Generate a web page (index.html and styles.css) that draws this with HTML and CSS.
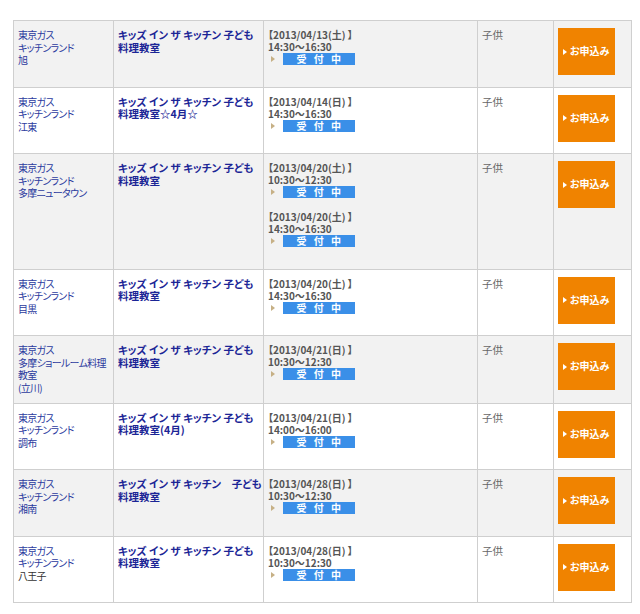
FILE: index.html
```html
<!DOCTYPE html>
<html lang="ja">
<head>
<meta charset="utf-8">
<title>キッズ イン ザ キッチン</title>
<link rel="stylesheet" href="styles.css">
</head>
<body>
<div class="wrap">
<table class="schedule">
  <colgroup>
    <col class="c-place"><col class="c-title"><col class="c-date"><col class="c-target"><col class="c-apply">
  </colgroup>
  <tbody>
    <tr class="odd">
      <td class="place">東京ガス<br>キッチンランド<br>旭</td>
      <td class="title">キッズ イン ザ キッチン 子ども<br>料理教室</td>
      <td class="dates">
        <div class="entry"><div class="d">【2013/04/13(土) 】</div><div class="t">14:30～16:30</div><div class="st"><span class="tri"></span><span class="badge">受 付 中</span></div></div>
      </td>
      <td class="target">子供</td>
      <td class="apply"><a class="btn" href="#"><span class="btri"></span>お申込み</a></td>
    </tr>
    <tr>
      <td class="place">東京ガス<br>キッチンランド<br>江東</td>
      <td class="title">キッズ イン ザ キッチン 子ども<br>料理教室☆4月☆</td>
      <td class="dates">
        <div class="entry"><div class="d">【2013/04/14(日) 】</div><div class="t">14:30～16:30</div><div class="st"><span class="tri"></span><span class="badge">受 付 中</span></div></div>
      </td>
      <td class="target">子供</td>
      <td class="apply"><a class="btn" href="#"><span class="btri"></span>お申込み</a></td>
    </tr>
    <tr class="odd">
      <td class="place">東京ガス<br>キッチンランド<br>多摩ニュータウン</td>
      <td class="title">キッズ イン ザ キッチン 子ども<br>料理教室</td>
      <td class="dates">
        <div class="entry"><div class="d">【2013/04/20(土) 】</div><div class="t">10:30～12:30</div><div class="st"><span class="tri"></span><span class="badge">受 付 中</span></div></div>
        <div class="entry"><div class="d">【2013/04/20(土) 】</div><div class="t">14:30～16:30</div><div class="st"><span class="tri"></span><span class="badge">受 付 中</span></div></div>
      </td>
      <td class="target">子供</td>
      <td class="apply"><a class="btn" href="#"><span class="btri"></span>お申込み</a></td>
    </tr>
    <tr>
      <td class="place">東京ガス<br>キッチンランド<br>目黒</td>
      <td class="title">キッズ イン ザ キッチン 子ども<br>料理教室</td>
      <td class="dates">
        <div class="entry"><div class="d">【2013/04/20(土) 】</div><div class="t">14:30～16:30</div><div class="st"><span class="tri"></span><span class="badge">受 付 中</span></div></div>
      </td>
      <td class="target">子供</td>
      <td class="apply"><a class="btn" href="#"><span class="btri"></span>お申込み</a></td>
    </tr>
    <tr class="odd">
      <td class="place">東京ガス<br>多摩ショールーム料理<br>教室<br>(立川)</td>
      <td class="title">キッズ イン ザ キッチン 子ども<br>料理教室</td>
      <td class="dates">
        <div class="entry"><div class="d">【2013/04/21(日) 】</div><div class="t">10:30～12:30</div><div class="st"><span class="tri"></span><span class="badge">受 付 中</span></div></div>
      </td>
      <td class="target">子供</td>
      <td class="apply"><a class="btn" href="#"><span class="btri"></span>お申込み</a></td>
    </tr>
    <tr>
      <td class="place">東京ガス<br>キッチンランド<br>調布</td>
      <td class="title">キッズ イン ザ キッチン 子ども<br>料理教室(4月)</td>
      <td class="dates">
        <div class="entry"><div class="d">【2013/04/21(日) 】</div><div class="t">14:00～16:00</div><div class="st"><span class="tri"></span><span class="badge">受 付 中</span></div></div>
      </td>
      <td class="target">子供</td>
      <td class="apply"><a class="btn" href="#"><span class="btri"></span>お申込み</a></td>
    </tr>
    <tr class="odd">
      <td class="place">東京ガス<br>キッチンランド<br>湘南</td>
      <td class="title">キッズ イン ザ キッチン　子ども<br>料理教室</td>
      <td class="dates">
        <div class="entry"><div class="d">【2013/04/28(日) 】</div><div class="t">10:30～12:30</div><div class="st"><span class="tri"></span><span class="badge">受 付 中</span></div></div>
      </td>
      <td class="target">子供</td>
      <td class="apply"><a class="btn" href="#"><span class="btri"></span>お申込み</a></td>
    </tr>
    <tr>
      <td class="place">東京ガス<br>キッチンランド<br><span class="plain">八王子</span></td>
      <td class="title">キッズ イン ザ キッチン 子ども<br>料理教室</td>
      <td class="dates">
        <div class="entry"><div class="d">【2013/04/28(日) 】</div><div class="t">10:30～12:30</div><div class="st"><span class="tri"></span><span class="badge">受 付 中</span></div></div>
      </td>
      <td class="target">子供</td>
      <td class="apply"><a class="btn" href="#"><span class="btri"></span>お申込み</a></td>
    </tr>
  </tbody>
</table>
</div>
</body>
</html>
```
FILE: styles.css
```css
html, body {
  margin: 0;
  padding: 0;
  background: #fff;
}
body {
  font-family: "Noto Sans CJK JP", "Noto Sans", sans-serif;
  font-feature-settings: "palt";
  font-size: 10px;
  color: #555;
}
.wrap {
  padding: 20px 0 0 13px;
}
.schedule {
  border-collapse: collapse;
  table-layout: fixed;
  width: 618px;
}
.c-place { width: 100px; }
.c-title { width: 150px; }
.c-date { width: 214px; }
.c-target { width: 76px; }
.c-apply { width: 78px; }
.schedule td {
  border: 1px solid #cfcfcf;
  vertical-align: top;
  padding: 8px 3px 8.5px 4px;
  line-height: 12.5px;
}
.schedule tr.odd td {
  background: #f2f2f2;
}
.place {
  color: #2b3a9e;
  font-size: 10px;
  letter-spacing: -0.7px;
  white-space: nowrap;
}
.place .plain {
  color: #333;
}
.title {
  color: #1b2596;
  font-weight: bold;
  font-size: 10.5px;
  white-space: nowrap;
}
.dates {
  padding-left: 4px;
}
.entry {
  height: 36px;
  margin-bottom: 13px;
}
.d, .t {
  font-weight: bold;
  color: #555;
  height: 12px;
  line-height: 12px;
  white-space: nowrap;
}
.st {
  display: flex;
  align-items: center;
  height: 12px;
}
.tri {
  width: 0;
  height: 0;
  border-top: 3.5px solid transparent;
  border-bottom: 3.5px solid transparent;
  border-left: 4.5px solid #c6b085;
  margin: 0 8px 0 3px;
}
.badge {
  display: block;
  width: 72px;
  height: 12px;
  line-height: 12px;
  background: #3a8fe8;
  color: #fff;
  font-weight: bold;
  font-size: 10px;
  text-align: center;
  letter-spacing: 2.5px;
  text-indent: 2px;
}
.target {
  color: #666;
  padding-left: 5px;
  font-size: 10.5px;
}
.schedule td.apply {
  padding: 7px 4px 8.5px 4px;
}
.btn {
  display: flex;
  align-items: center;
  justify-content: center;
  width: 57px;
  height: 47px;
  background: #f08300;
  color: #fff;
  font-weight: bold;
  font-size: 10px;
  text-decoration: none;
  padding-right: 1px;
  box-sizing: border-box;
}
.btri {
  width: 0;
  height: 0;
  border-top: 3.5px solid transparent;
  border-bottom: 3.5px solid transparent;
  border-left: 4px solid #fff;
  margin-right: 3px;
}
```
